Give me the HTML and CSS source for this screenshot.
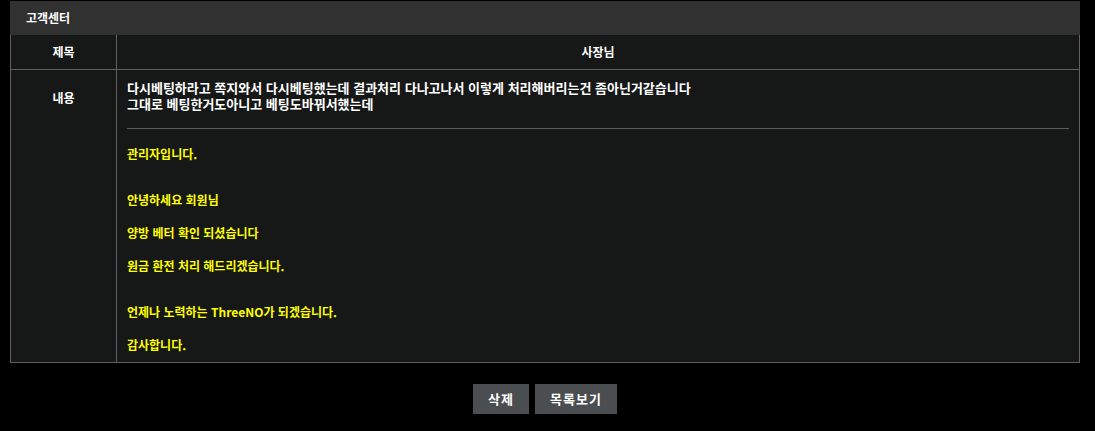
FILE: index.html
```html
<!DOCTYPE html>
<html lang="ko">
<head>
  <meta charset="UTF-8" />
  <title>고객센터</title>
  <link rel="stylesheet" href="styles.css">
</head>
<body>

<div class="board">
  <div class="boardHead">고객센터</div>

  <table class="view">
    <tr class="subjectRow">
      <th>제목</th>
      <td class="subject">사장님</td>
    </tr>
    <tr class="contentRow">
      <th>내용</th>
      <td class="content">
        <div class="question">
          <p>다시베팅하라고 쪽지와서 다시베팅했는데 결과처리 다나고나서 이렇게 처리해버리는건 좀아닌거같습니다</p>
          <p>그대로 베팅한거도아니고 베팅도바꿔서했는데</p>
        </div>
        <hr>
        <div class="answer">
          <p>관리자입니다.</p>
          <p class="gap"></p>
          <p>안녕하세요 회원님</p>
          <p>양방 베터 확인 되셨습니다</p>
          <p>원금 환전 처리 해드리겠습니다.</p>
          <p class="gap"></p>
          <p>언제나 노력하는 ThreeNO가 되겠습니다.</p>
          <p>감사합니다.</p>
        </div>
      </td>
    </tr>
  </table>

  <div class="btns">
    <button class="btn">삭제</button>
    <button class="btn">목록보기</button>
  </div>
</div>

</body>
</html>
```

FILE: styles.css
```css
*        { box-sizing:border-box; margin:0; padding:0; }
body     { background:#000; color:#fff; font-family:'Noto Sans CJK KR','Malgun Gothic',sans-serif;
           font-size:12px; font-weight:bold; }
.board   { width:1070px; margin:1px 0 0 10px; }
.boardHead { height:34px; line-height:34px; padding-left:16px; background:#313131; color:#fff; }

/* view table */
.view    { width:100%; border-collapse:collapse; background:#161717; }
.view th,
.view td { border:1px solid #5f6060; }
.view th { width:106px; text-align:center; font-weight:bold; }
.subjectRow th,
.subjectRow td { height:34px; border-top:none; }
.subject { text-align:center; }
.contentRow th { vertical-align:top; padding-top:19px; }
.content { vertical-align:top; padding:10px 10px 8px 10px; }
.question { font-size:13px; line-height:16px; }
hr       { border:none; border-top:1px solid #5a5a5a; margin:16px 0 16px; }
.answer  { color:#ffff00; }
.answer p { line-height:18px; margin-bottom:15px; }
.answer p:last-child { margin-bottom:0; }
.answer p.gap { height:13px; margin-bottom:0; }

/* buttons */
.btns    { display:flex; justify-content:center; gap:6px; margin-top:21px; }
.btn     { height:30px; padding:0 15px; border:none; background:#4b4e51; color:#fff;
           font:inherit; font-size:13px; letter-spacing:1px; cursor:pointer; }
.btn:hover { filter:brightness(1.1); }
```
